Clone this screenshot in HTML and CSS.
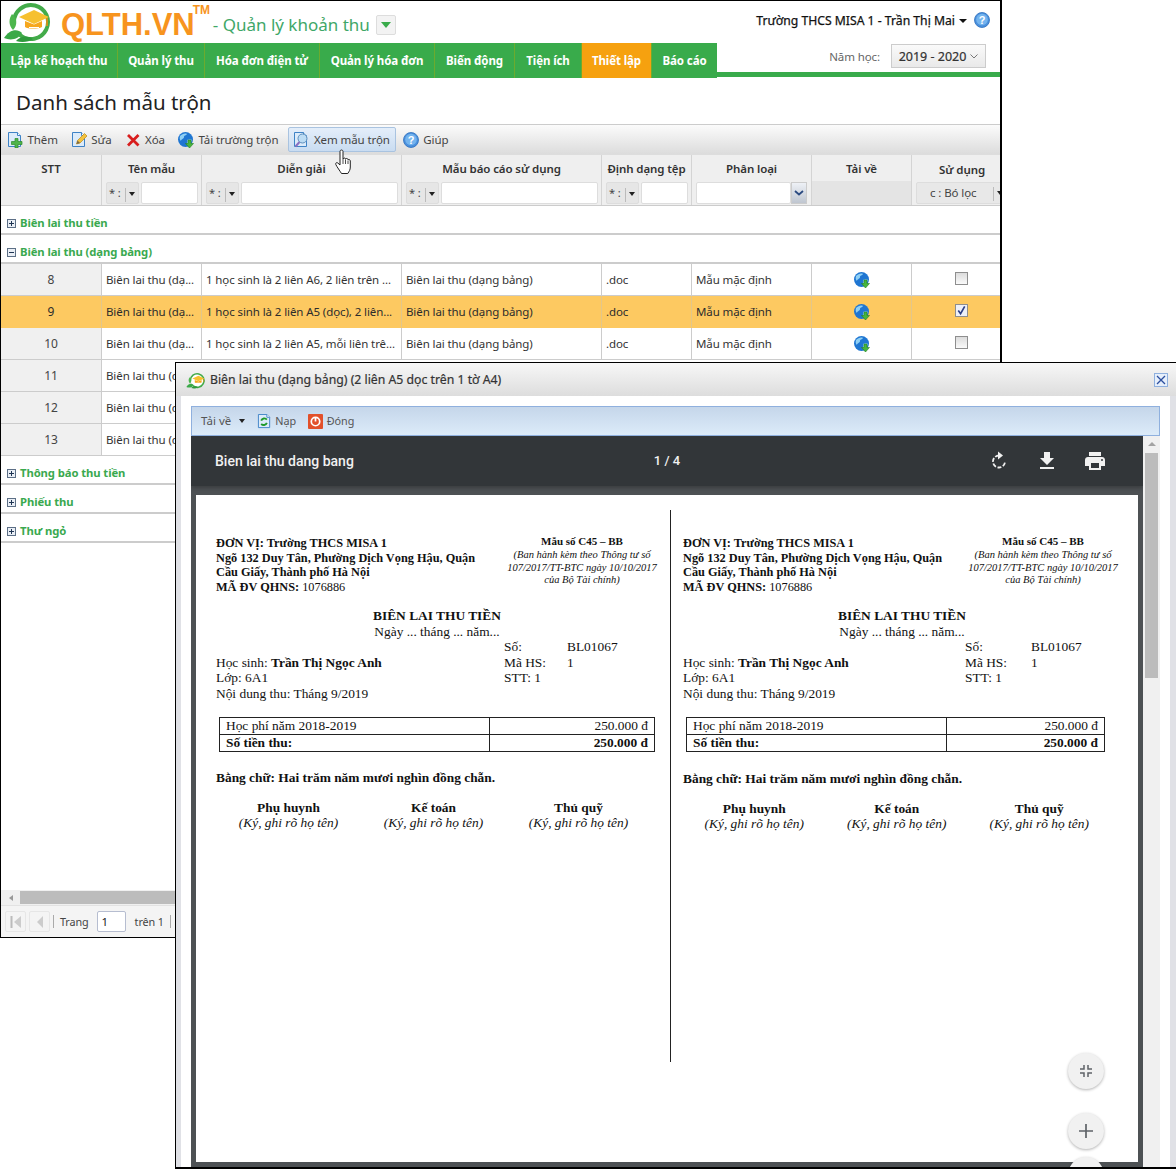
FILE: index.html
```html
<!DOCTYPE html>
<html lang="vi">
<head>
<meta charset="utf-8">
<title>Danh sách mẫu trộn</title>
<link rel="stylesheet" href="styles.css">
</head>
<body>
<svg class="defs" width="0" height="0" aria-hidden="true">
  <defs>
    <symbol id="i-page" viewBox="0 0 16 16"><path d="M1.500 .5h9l3 3v11h-12z" fill="#dcebfa" stroke="#3f83c6"/><path d="M10.500 .5v3h3" fill="#fff" stroke="#3f83c6"/></symbol>
    <symbol id="i-add" viewBox="0 0 16 16"><use href="#i-page"/><path d="M8 6.500h3v3h4v3h-4V16H8v-3.500H4.500v-3H8z" fill="#4fb44a" stroke="#2c8a2c" stroke-width=".7"/></symbol>
    <symbol id="i-edit" viewBox="0 0 16 16"><use href="#i-page"/><path d="M5.500 12l1-3.500L13.500 1.500l2.500 2.500-7 7z" fill="#f4c23c" stroke="#b98a1d" stroke-width=".7"/><path d="M5.500 12l1-3.500 2.500 2.500z" fill="#7a6a4a"/></symbol>
    <symbol id="i-del" viewBox="0 0 16 16"><path d="M3 3l10.500 10.500M13.500 3L3 13.500" stroke="#d81e1e" stroke-width="2.800" fill="none"/></symbol>
    <symbol id="i-globe" viewBox="0 0 16 16"><circle cx="7.500" cy="7.500" r="7.500" fill="#1f76d2"/><path d="M2 4c2-2 5-3 7-2-1 2-3 1-3 3S3 7 3 9C1.500 8 1.500 6 2 4zM9 8c2-1 4-1 5 0-1 3-3 5-5 5-1-2 1-3 0-5z" fill="#8fd0f5"/><path d="M10 8h3v3.500h2.500L11.500 16l-4-4.500H10z" fill="#46b53c" stroke="#237e22" stroke-width=".6"/></symbol>
    <symbol id="i-view" viewBox="0 0 16 16"><use href="#i-page"/><circle cx="9.500" cy="6.500" r="4.500" fill="#bcdcf4" stroke="#5f8fbd"/><path d="M6.500 10L2.500 14.500" stroke="#8a6fc0" stroke-width="2"/></symbol>
    <symbol id="i-help" viewBox="0 0 16 16"><circle cx="8" cy="8" r="7.500" fill="#4a90dd" stroke="#2d6fbc" stroke-width=".8"/><circle cx="8" cy="7.500" r="5.800" fill="#74b4ee"/><text x="8" y="12" text-anchor="middle" font-family="Liberation Sans, sans-serif" font-weight="700" font-size="11" fill="#fff">?</text></symbol>
    <symbol id="i-plusbox" viewBox="0 0 9 9"><rect x=".5" y=".5" width="8" height="8" fill="#e9eef5" stroke="#5c6f86"/><path d="M2 4.500h5M4.500 2v5" stroke="#1f3553"/></symbol>
    <symbol id="i-minusbox" viewBox="0 0 9 9"><rect x=".5" y=".5" width="8" height="8" fill="#e9eef5" stroke="#5c6f86"/><path d="M2 4.500h5" stroke="#1f3553"/></symbol>
    <symbol id="i-logo" viewBox="0 0 50 42">
      <path d="M17 34a17 17 0 1 0-6-13" fill="#fff" stroke="#43ab4a" stroke-width="4"/>
      <path d="M1 37c5-8 13-10 18-5-3 6-11 8-18 5z" fill="#3aa948"/>
      <path d="M10 29c-5-5-4-12-1-16 5 4 6 11 1 16z" fill="#4cb64c"/>
      <path d="M13 40c6 2 13 1 17-2-5-4-13-3-17 2z" fill="#2f9a3d"/>
      <path d="M16 16l15-7 15 7-15 7z" fill="#f6c02f"/>
      <path d="M22 20v6c3 2 13 2 17 0v-6l-8 3.500z" fill="#f6a71d"/>
      <path d="M26 26.500h10M27 29h8" stroke="#fff" stroke-width="1"/>
      <path d="M44 17v8" stroke="#f08c10" stroke-width="1.500"/>
    </symbol>
    <symbol id="i-hand" viewBox="0 0 16 26"><path d="M5 2.500c0-2 3-2 3 0V10c1-1.500 2.500-1 2.500 0 1-1 2.500-.5 2.500.7 1-.5 2.300 0 2.300 1.300v6c0 3-1 4-2.500 6.500H6.500C5 22 2 18 .8 15.500c-.6-1.500 1-2.500 2-1.500L5 16z" fill="#fff" stroke="#222" stroke-width="1"/><path d="M8 10v5M10.500 10.500V15M13 11.500V15" stroke="#222" stroke-width=".8"/></symbol>
  </defs>
</svg>

<div class="app">
  <header class="top">
    <svg class="logo"><use href="#i-logo"/></svg>
    <span class="brand">QLTH.VN<sup class="tm">TM</sup></span>
    <span class="module">- Quản lý khoản thu</span>
    <button class="module-btn"><span class="tri-green"></span></button>
    <span class="user">Trường THCS MISA 1 - Trần Thị Mai<span class="caret-user"></span></span>
    <svg class="ic-help-top"><use href="#i-help"/></svg>
  </header>

  <nav class="nav">
    <div class="tabs">
      <a class="tab">Lập kế hoạch thu</a>
      <a class="tab">Quản lý thu</a>
      <a class="tab">Hóa đơn điện tử</a>
      <a class="tab">Quản lý hóa đơn</a>
      <a class="tab">Biến động</a>
      <a class="tab">Tiện ích</a>
      <a class="tab tab-active">Thiết lập</a>
      <a class="tab">Báo cáo</a>
    </div>
    <div class="year">
      <span class="year-label">Năm học:</span>
      <span class="year-select">2019 - 2020<svg class="chev" viewBox="0 0 8 5"><path d="M.5.5L4 4 7.500.5" fill="none" stroke="#777"/></svg></span>
    </div>
  </nav>

  <h1 class="page-title">Danh sách mẫu trộn</h1>

  <div class="toolbar">
    <a class="tool"><svg class="ic16"><use href="#i-add"/></svg>Thêm</a>
    <a class="tool"><svg class="ic16"><use href="#i-edit"/></svg>Sửa</a>
    <a class="tool"><svg class="ic16"><use href="#i-del"/></svg>Xóa</a>
    <a class="tool"><svg class="ic16"><use href="#i-globe"/></svg>Tải trường trộn</a>
    <a class="tool tool-hover"><svg class="ic16"><use href="#i-view"/></svg>Xem mẫu trộn</a>
    <a class="tool"><svg class="ic16"><use href="#i-help"/></svg>Giúp</a>
  </div>

  <div class="thead grid">
    <div class="th">STT</div>
    <div class="th">Tên mẫu<div class="filter"><span class="op">* :<i class="op-caret"></i></span><span class="fin"></span></div></div>
    <div class="th">Diễn giải<div class="filter"><span class="op">* :<i class="op-caret"></i></span><span class="fin"></span></div></div>
    <div class="th">Mẫu báo cáo sử dụng<div class="filter"><span class="op">* :<i class="op-caret"></i></span><span class="fin"></span></div></div>
    <div class="th">Định dạng tệp<div class="filter"><span class="op">* :<i class="op-caret"></i></span><span class="fin"></span></div></div>
    <div class="th">Phân loại<div class="filter"><span class="fin"></span><span class="combo-btn"><svg class="combo-chev" viewBox="0 0 10 6"><path d="M1 1l4 3.500L9 1" fill="none" stroke="#2b4a80" stroke-width="1.800"/></svg></span></div></div>
    <div class="th th-plain">Tải về</div>
    <div class="th th-use">Sử dụng<div class="filter filter-use"><span class="use-box">c : Bó lọc</span><i class="op-caret"></i></div></div>
  </div>

  <div class="tbody">
    <div class="group"><svg class="ic9"><use href="#i-plusbox"/></svg>Biên lai thu tiền</div>
    <div class="group"><svg class="ic9"><use href="#i-minusbox"/></svg>Biên lai thu (dạng bảng)</div>

    <div class="row grid">
      <div class="td td-num">8</div><div class="td">Biên lai thu (dạ...</div><div class="td">1 học sinh là 2 liên A6, 2 liên trên ...</div><div class="td">Biên lai thu (dạng bảng)</div><div class="td">.doc</div><div class="td">Mẫu mặc định</div>
      <div class="td td-c"><svg class="ic16"><use href="#i-globe"/></svg></div><div class="td td-c td-use"><span class="check"></span></div>
    </div>
    <div class="row row-on grid">
      <div class="td td-num">9</div><div class="td">Biên lai thu (dạ...</div><div class="td">1 học sinh là 2 liên A5 (dọc), 2 liên...</div><div class="td">Biên lai thu (dạng bảng)</div><div class="td">.doc</div><div class="td">Mẫu mặc định</div>
      <div class="td td-c"><svg class="ic16"><use href="#i-globe"/></svg></div><div class="td td-c td-use"><span class="check check-on"><svg viewBox="0 0 12 12"><path d="M2.500 6l2.500 3.500L9.500 1.500" fill="none" stroke="#2c3f86" stroke-width="1.800"/></svg></span></div>
    </div>
    <div class="row grid">
      <div class="td td-num">10</div><div class="td">Biên lai thu (dạ...</div><div class="td">1 học sinh là 2 liên A5, mỗi liên trê...</div><div class="td">Biên lai thu (dạng bảng)</div><div class="td">.doc</div><div class="td">Mẫu mặc định</div>
      <div class="td td-c"><svg class="ic16"><use href="#i-globe"/></svg></div><div class="td td-c td-use"><span class="check"></span></div>
    </div>
    <div class="row grid"><div class="td td-num">11</div><div class="td">Biên lai thu (dạ...</div></div>
    <div class="row grid"><div class="td td-num">12</div><div class="td">Biên lai thu (dạ...</div></div>
    <div class="row grid"><div class="td td-num">13</div><div class="td">Biên lai thu (dạ...</div></div>

    <div class="group"><svg class="ic9"><use href="#i-plusbox"/></svg>Thông báo thu tiền</div>
    <div class="group"><svg class="ic9"><use href="#i-plusbox"/></svg>Phiếu thu</div>
    <div class="group"><svg class="ic9"><use href="#i-plusbox"/></svg>Thư ngỏ</div>
  </div>

  <div class="hscroll"><span class="hscroll-arrow"></span><span class="hscroll-thumb"></span></div>

  <div class="pager">
    <span class="pg-btn"><svg viewBox="0 0 12 14" width="12" height="14"><path d="M1.500 1v12" stroke="#bbb" stroke-width="2"/><path d="M11 1L4 7l7 6z" fill="#ccc"/></svg></span>
    <span class="pg-btn"><svg viewBox="0 0 8 14" width="8" height="14"><path d="M7 1L1 7l6 6z" fill="#ccc"/></svg></span>
    <span class="pg-sep"></span>
    <span class="pg-text">Trang</span>
    <span class="pg-input">1</span>
    <span class="pg-text">trên 1</span>
    <span class="pg-sep"></span>
  </div>

  <svg class="hand"><use href="#i-hand"/></svg>
</div>

<section class="dialog">
  <div class="dlg-title">
    <svg class="dlg-logo" viewBox="0 0 50 42"><use href="#i-logo"/></svg>
    <span>Biên lai thu (dạng bảng) (2 liên A5 dọc trên 1 tờ A4)</span>
    <span class="dlg-close"><svg viewBox="0 0 10 10" width="10" height="10"><path d="M1 1l8 8M9 1l-8 8" stroke="#2c4f9e" stroke-width="1.300"/></svg></span>
  </div>
  <div class="dlg-frame">
    <div class="dlg-body">
      <div class="dlg-tools">
        <a class="dt dt-first">Tải về<i class="dt-caret"></i></a>
        <a class="dt"><svg class="ic16" viewBox="0 0 16 16"><use href="#i-page"/><path d="M4.500 7a3.500 3.500 0 0 1 6-1M10.500 9.500a3.500 3.500 0 0 1-6 1" fill="none" stroke="#1f9a2b" stroke-width="2"/></svg>Nạp</a>
        <a class="dt"><svg class="ic16" viewBox="0 0 16 16"><rect width="16" height="16" rx="1" fill="#e2502a"/><circle cx="8" cy="8" r="4.500" fill="none" stroke="#fff" stroke-width="1.800"/><path d="M8 4v4" stroke="#fff" stroke-width="1.800"/></svg>Đóng</a>
      </div>
      <div class="viewer-wrap">
        <div class="viewer">
          <div class="pdf-bar">
            <span class="pdf-name">Bien lai thu dang bang</span>
            <span class="pdf-count">1 / 4</span>
            <span class="pdf-actions">
              <svg class="ic24" viewBox="0 0 24 24"><path d="M12 6.500a6 6 0 1 0 6 6" fill="none" stroke="#f1f1f1" stroke-width="1.800" stroke-dasharray="4 1.600"/><path d="M11 2.500l5 4-5 4z" fill="#f1f1f1"/></svg>
              <svg class="ic24" viewBox="0 0 24 24"><path d="M19 9h-4V3H9v6H5l7 7zM5 18v2h14v-2z" fill="#f1f1f1"/></svg>
              <svg class="ic24" viewBox="0 0 24 24"><path d="M19 8H5c-1.700 0-3 1.300-3 3v6h4v4h12v-4h4v-6c0-1.700-1.300-3-3-3zm-3 11H8v-5h8zm3-7a1 1 0 1 1 0-2 1 1 0 0 1 0 2zM18 3H6v4h12z" fill="#f1f1f1"/></svg>
            </span>
          </div>
          <div class="pdf-area">
            <article class="sheet">
              <div class="doc doc-a">
                <div class="doc-head">
                  <div class="doc-org"><b>ĐƠN VỊ: Trường THCS MISA 1<br>Ngõ 132 Duy Tân, Phường Dịch Vọng Hậu, Quận<br>Cầu Giấy, Thành phố Hà Nội<br>MÃ ĐV QHNS:</b> 1076886</div>
                  <div class="doc-form"><b>Mẫu số C45 – BB</b><br><i>(Ban hành kèm theo Thông tư số<br>107/2017/TT-BTC ngày 10/10/2017<br>của Bộ Tài chính)</i></div>
                </div>
                <div class="doc-title"><b>BIÊN LAI THU TIỀN</b><br>Ngày ... tháng ... năm...</div>
                <div class="doc-info">
                  <span></span><span>Số:</span><span>BL01067</span>
                  <span>Học sinh: <b>Trần Thị Ngọc Anh</b></span><span>Mã HS:</span><span>1</span>
                  <span>Lớp: 6A1</span><span>STT: 1</span><span></span>
                  <span>Nội dung thu: Tháng 9/2019</span><span></span><span></span>
                </div>
                <table class="doc-table">
                  <tr><td>Học phí năm 2018-2019</td><td class="r">250.000 đ</td></tr>
                  <tr><td><b>Số tiền thu:</b></td><td class="r"><b>250.000 đ</b></td></tr>
                </table>
                <p class="doc-words">Bằng chữ: Hai trăm năm mươi nghìn đồng chẵn.</p>
                <div class="doc-signs">
                  <div><b>Phụ huynh</b><br><i>(Ký, ghi rõ họ tên)</i></div>
                  <div><b>Kế toán</b><br><i>(Ký, ghi rõ họ tên)</i></div>
                  <div><b>Thủ quỹ</b><br><i>(Ký, ghi rõ họ tên)</i></div>
                </div>
              </div>
              <div class="doc-rule"></div>
              <div class="doc doc-b">
                <div class="doc-head">
                  <div class="doc-org"><b>ĐƠN VỊ: Trường THCS MISA 1<br>Ngõ 132 Duy Tân, Phường Dịch Vọng Hậu, Quận<br>Cầu Giấy, Thành phố Hà Nội<br>MÃ ĐV QHNS:</b> 1076886</div>
                  <div class="doc-form"><b>Mẫu số C45 – BB</b><br><i>(Ban hành kèm theo Thông tư số<br>107/2017/TT-BTC ngày 10/10/2017<br>của Bộ Tài chính)</i></div>
                </div>
                <div class="doc-title"><b>BIÊN LAI THU TIỀN</b><br>Ngày ... tháng ... năm...</div>
                <div class="doc-info">
                  <span></span><span>Số:</span><span>BL01067</span>
                  <span>Học sinh: <b>Trần Thị Ngọc Anh</b></span><span>Mã HS:</span><span>1</span>
                  <span>Lớp: 6A1</span><span>STT: 1</span><span></span>
                  <span>Nội dung thu: Tháng 9/2019</span><span></span><span></span>
                </div>
                <table class="doc-table">
                  <tr><td>Học phí năm 2018-2019</td><td class="r">250.000 đ</td></tr>
                  <tr><td><b>Số tiền thu:</b></td><td class="r"><b>250.000 đ</b></td></tr>
                </table>
                <p class="doc-words">Bằng chữ: Hai trăm năm mươi nghìn đồng chẵn.</p>
                <div class="doc-signs">
                  <div><b>Phụ huynh</b><br><i>(Ký, ghi rõ họ tên)</i></div>
                  <div><b>Kế toán</b><br><i>(Ký, ghi rõ họ tên)</i></div>
                  <div><b>Thủ quỹ</b><br><i>(Ký, ghi rõ họ tên)</i></div>
                </div>
              </div>
            </article>
            <span class="fab fab-fit"><svg viewBox="0 0 16 16" width="16" height="16"><path d="M6 2v4H2M10 2v4h4M6 14v-4H2M10 14v-4h4" fill="none" stroke="#5f6368" stroke-width="1.500"/></svg></span>
            <span class="fab fab-plus"><svg viewBox="0 0 14 14" width="14" height="14"><path d="M7 0v14M0 7h14" stroke="#5f6368" stroke-width="1.700"/></svg></span>
            <span class="fab fab-minus"></span>
          </div>
        </div>
        <div class="vscroll"><span class="vs-arrow"></span><span class="vs-thumb"></span></div>
      </div>
    </div>
  </div>
</section>
</body>
</html>
```
FILE: styles.css
```css
* { box-sizing: border-box; }
html, body { margin: 0; height: 1169px; overflow: hidden; background: #fff; }
body { position: relative; font: 11.5px/16px "Noto Sans", "Open Sans", sans-serif; letter-spacing: -.1px; color: #333; }
.defs { position: absolute; }
a { display: block; }

/* Main window */
.app { position: relative; width: 1002px; height: 938px; border: 1px solid #000; border-right-width: 2px; display: flex; flex-direction: column; background: #fff; overflow: hidden; }

.top { height: 42px; flex: none; display: flex; align-items: center; position: relative; letter-spacing: 0; }
.logo { width: 50px; height: 42px; margin: 0 0 0 2px; flex: none; }
.brand { font: 700 31px/42px "Liberation Sans", sans-serif; color: #f7941e; margin: 6px 0 0 8px; position: relative; white-space: nowrap; }
.tm { font-size: 12px; line-height: 12px; position: absolute; top: 0; left: 100%; margin-left: -2px; }
.module { font-size: 17px; color: #3fa768; margin: 6px 0 0 18px; white-space: nowrap; }
.module-btn { width: 20px; height: 20px; margin: 6px 0 0 6px; padding: 0; border: 1px solid #ddd; border-radius: 2px; background: #f3f3f3; display: flex; align-items: center; justify-content: center; }
.tri-green { width: 0; height: 0; border: 5px solid transparent; border-top: 6px solid #39ab4b; border-bottom: 0; }
.user { margin-left: auto; font-size: 12.200px; color: #111; -webkit-text-stroke: .25px #111; white-space: nowrap; display: flex; align-items: center; transform: translateY(-1px); }
.caret-user { width: 0; height: 0; border: 4px solid transparent; border-top: 4px solid #111; border-bottom: 0; margin-left: 4px; }
.ic-help-top { width: 16px; height: 16px; margin: 0 10px 0 7px; transform: translateY(-2px); }

.nav { height: 34px; flex: none; display: flex; box-shadow: inset 0 -5px 0 #39ab4b; }
.tabs { display: grid; grid-template-columns: 117px 87px 115px 115px 80px 67px 70px 65px; }
.tab { background: #39ab4b; color: #fff; font-weight: 700; text-align: center; line-height: 35px; border-right: 1px solid #6cab2e; white-space: nowrap; }
.tab:last-child { border-right: 0; }
.tab-active { background: #f6a10f; }
.year { margin-left: auto; display: flex; align-items: flex-start; padding: 1px 14px 0 0; }
.year-label { color: #666; margin-right: 11px; line-height: 26px; }
.year-select { width: 95px; height: 24px; border: 1px solid #ccc; background: linear-gradient(#fafafa, #e9e9e9); color: #333; -webkit-text-stroke: .2px #333; font-size: 12.5px; letter-spacing: 0; line-height: 24px; text-align: center; white-space: nowrap; }
.chev { width: 8px; height: 5px; margin-left: 4px; vertical-align: 2px; }

.page-title { height: 47px; flex: none; margin: 0; padding: 8px 0 0 15px; font-weight: 400; font-size: 20.5px; letter-spacing: 0; line-height: 34px; color: #222; }

.toolbar { height: 30px; flex: none; border-top: 1px solid #ccc; background: linear-gradient(#fbfbfb, #dcdcdc); display: flex; align-items: center; padding-left: 5px; color: #444; }
.tool { display: flex; align-items: center; gap: 4.500px; white-space: nowrap; margin-right: 11px; border: 1px solid transparent; height: 25px; }
.tool-hover { background: linear-gradient(#e4eefa, #c9dcf1); border-color: #a9c3e0; border-radius: 2px; padding: 0 5px 0 4px; margin: 0 6px 0 -2px; }
.ic16 { width: 16px; height: 16px; flex: none; }

.grid { display: grid; grid-template-columns: 101px 100px 200px 200px 90px 120px 100px 90px; }
.thead { height: 52px; flex: none; background: #efefef; border-top: 1px solid #ddd; border-bottom: 1px solid #ccc; }
.th { border-right: 1px solid #d4d4d4; text-align: center; font-weight: 600; color: #333; padding-top: 6px; overflow: hidden; white-space: nowrap; }
.th:last-child { border-right: 0; }
.th-plain { background: linear-gradient(#efefef 0, #efefef 26px, #e4e4e4 26px); }
.th-use { padding: 7px 0 0 10px; }
.filter { display: flex; gap: 2px; margin: 5px 3px 0 4px; height: 22px; font-weight: 400; }
.op { width: 33px; flex: none; border: 1px solid #ddd; border-radius: 2px; background: #e6e6e6; font-size: 11px; text-align: left; padding-left: 2px; line-height: 20px; position: relative; color: #444; }
.op-caret { position: absolute; right: 3px; top: 9px; width: 0; height: 0; border: 3px solid transparent; border-top: 4px solid #222; border-bottom: 0; }
.op-caret::before { content: ""; position: absolute; left: -7px; top: -8px; width: 1px; height: 14px; background: #bbb; }
.fin { flex: 1; min-width: 0; border: 1px solid #ddd; border-radius: 2px; background: #fff; }
.combo-btn { width: 16px; flex: none; margin: 0 1px 0 -2px; background: linear-gradient(#eef1f6, #bfc6d0); border: 1px solid #ccc; display: flex; align-items: center; justify-content: center; }
.combo-chev { width: 10px; height: 6px; }
.filter-use { margin: 4px 0 0 -6px; width: 100%; position: relative; }
.use-box { width: 90px; flex: none; border: 1px solid #ddd; border-radius: 2px; background: #e8e8e8; text-align: left; padding-left: 13px; color: #444; line-height: 20px; }
.filter-use .op-caret { right: auto; left: 81px; }

.tbody { flex: 1; min-height: 0; overflow: hidden; }
.group { height: 29px; border-bottom: 2px solid #ccc; display: flex; align-items: center; gap: 4px; padding: 7px 0 0 6px; font-weight: 700; font-size: 11.300px; color: #3aa94f; white-space: nowrap; }
.ic9 { width: 9px; height: 9px; flex: none; }
.row { height: 32px; }
.row-on { background: #fdc961; }
.td { border-right: 1px solid #ccc; border-bottom: 1px solid #ccc; padding: 0 0 0 4px; line-height: 31px; color: #333; white-space: nowrap; overflow: hidden; }
.td:last-child { border-right: 0; }
.td-num { background: #f0f0f0; text-align: center; padding: 0; font-size: 12px; color: #444; }
.row-on .td-num { background: transparent; }
.row-on .td { border-bottom-color: #fdc961; border-right-color: #e3c68a; color: #2c2c2c; }
.td-c { padding: 0; display: flex; align-items: center; justify-content: center; }
.td-use { padding-left: 9px; }
.check { width: 13px; height: 13px; border: 1px solid #8e8e8e; background: linear-gradient(#dcdcdc, #fafafa); display: block; margin-top: -3px; }
.check svg { display: block; width: 11px; height: 11px; }
.check-on { background: #eef0f8; }

.hscroll { height: 15px; flex: none; background: #f0f0f0; display: flex; align-items: center; }
.hscroll-arrow { width: 0; height: 0; border: 3px solid transparent; border-right: 4px solid #999; border-left: 0; margin-left: 8px; }
.hscroll-thumb { flex: 1; height: 13px; margin-left: 7px; background: #bcbcbc; }
.pager { height: 32px; flex: none; background: #f4f4f4; border-top: 1px solid #e2e2e2; display: flex; align-items: center; padding-left: 4px; color: #444; font-size: 10.800px; }
.pg-btn { width: 21px; height: 21px; border: 1px solid #e6e6e6; border-radius: 2px; margin-right: 3px; display: flex; align-items: center; justify-content: center; }
.pg-sep { width: 1px; height: 13px; background: #aaa; margin: 0 6px 0 0; }
.pg-text { white-space: nowrap; }
.pg-input { width: 29px; height: 21px; border: 1px solid #b6bdd0; border-radius: 2px; background: #fff; margin: 0 9px 0 8px; padding-left: 4px; line-height: 19px; font-size: 11.500px; color: #222; }
.pg-input + .pg-text { margin-right: 6px; }
.hand { position: absolute; left: 334px; top: 148px; width: 16px; height: 26px; }

/* Dialog */
.dialog { position: absolute; left: 175px; top: 362px; width: 1001px; height: 807px; border: solid #000; border-width: 1px 0 2px 1px; background: #e0e1e6; display: flex; flex-direction: column; overflow: hidden; }
.dlg-title { height: 33px; flex: none; background: linear-gradient(#f7f7f7, #dddddd); display: flex; align-items: center; padding: 1px 8px 0 10px; gap: 4px; font-size: 12.250px; letter-spacing: 0; -webkit-text-stroke: .2px #333; color: #333; white-space: nowrap; }
.dlg-logo { width: 20px; height: 17px; flex: none; }
.dlg-close { margin-left: auto; width: 14px; height: 14px; border: 1px solid #8fb0de; background: #e6effb; display: flex; align-items: center; justify-content: center; }
.dlg-frame { flex: 1; min-height: 0; padding: 0 6px 0 5px; }
.dlg-body { height: 100%; background: #fff; padding: 10px 10px 0; display: flex; flex-direction: column; }
.dlg-tools { height: 30px; flex: none; border: 1px solid #8fb0de; background: linear-gradient(#c5d6ea, #dcebf9); display: flex; align-items: center; padding-left: 9px; gap: 12px; color: #555; font-size: 10.800px; letter-spacing: 0; }
.dt { display: flex; align-items: center; gap: 3.500px; }
.dt .ic16 { width: 15px; height: 15px; }
.dt-first { font-size: 11.500px; }
.dt-caret { width: 0; height: 0; border: 3px solid transparent; border-top: 4px solid #222; border-bottom: 0; margin-left: 4px; }
.viewer-wrap { flex: 1; min-height: 0; display: flex; }
.viewer { flex: 1; min-width: 0; background: #4d5154; position: relative; overflow: hidden; display: flex; flex-direction: column; }
.pdf-bar { height: 50px; flex: none; background: #323639; display: grid; grid-template-columns: 1fr auto 1fr; align-items: center; padding: 0 24px; color: #f1f1f1; font-family: Roboto, sans-serif; font-size: 14px; letter-spacing: 0; font-weight: 500; box-shadow: 0 2px 4px rgba(0,0,0,.25); }
.pdf-count { font-size: 13px; }
.pdf-actions { display: flex; justify-content: flex-end; gap: 24px; margin-right: 12px; }
.ic24 { width: 24px; height: 24px; }
.pdf-area { flex: 1; min-height: 0; padding: 9px 5px 5px; }
.sheet { height: 100%; background: #fff; display: flex; padding-left: 20px; font: 13.400px/15.600px "Liberation Serif", serif; letter-spacing: 0; color: #111; }
.doc { flex: none; padding-top: 41px; }
.doc-a { width: 442px; }
.doc-b { width: 438px; margin-left: 12px; }
.doc-rule { width: 1px; height: 552px; margin: 15px 0 0 12px; background: #222; flex: none; }
.doc-head { display: flex; justify-content: space-between; height: 58px; }
.doc-org { line-height: 14.600px; white-space: nowrap; font-size: 12.300px; }
.doc-form { text-align: center; width: 152px; font-size: 10.500px; line-height: 12.800px; white-space: nowrap; margin-top: -1px; }
.doc-form b { font-size: 11px; }
.doc-b .doc-form { width: 156px; }
.doc-title { text-align: center; padding-top: 14px; }
.doc-info { display: grid; grid-template-columns: 288px 63px 1fr; }
.doc-b .doc-info { grid-template-columns: 282px 66px 1fr; }
.doc-table { border-collapse: collapse; width: 436px; margin: 15px 0 0 3px; table-layout: fixed; border: 1.500px solid #222; }
.doc-b .doc-table { width: 419px; }
.doc-table td { border: 1px solid #222; padding: 0 6px 0 6px; height: 17px; line-height: 15px; }
.doc-table td:first-child { width: 270px; }
.doc-b .doc-table td:first-child { width: 260px; }
.doc-table .r { text-align: right; }
.doc-words { margin: 18px 0 0; font-weight: 700; height: 15px; white-space: nowrap; }
.doc-signs { display: grid; grid-template-columns: repeat(3, 145px); margin-top: 15px; text-align: center; line-height: 15px; }
.doc-b .doc-words { margin-top: 19px; }
.doc-b .doc-signs { grid-template-columns: repeat(3, 142.500px); }
.fab { position: absolute; left: 877px; width: 36px; height: 36px; border-radius: 50%; background: #f1f1f1; box-shadow: 0 1px 3px rgba(0,0,0,.3); display: flex; align-items: center; justify-content: center; }
.fab-fit { top: 617px; }
.fab-plus { top: 677px; }
.fab-minus { top: 721px; }
.vscroll { width: 17px; flex: none; background: #f0f0f0; display: flex; flex-direction: column; align-items: center; }
.vs-arrow { width: 0; height: 0; border: 4px solid transparent; border-bottom: 4px solid #a3a3a3; border-top: 0; margin-top: 6px; }
.vs-thumb { width: 13px; height: 225px; margin-top: 7px; background: #bcbcbc; }
```
